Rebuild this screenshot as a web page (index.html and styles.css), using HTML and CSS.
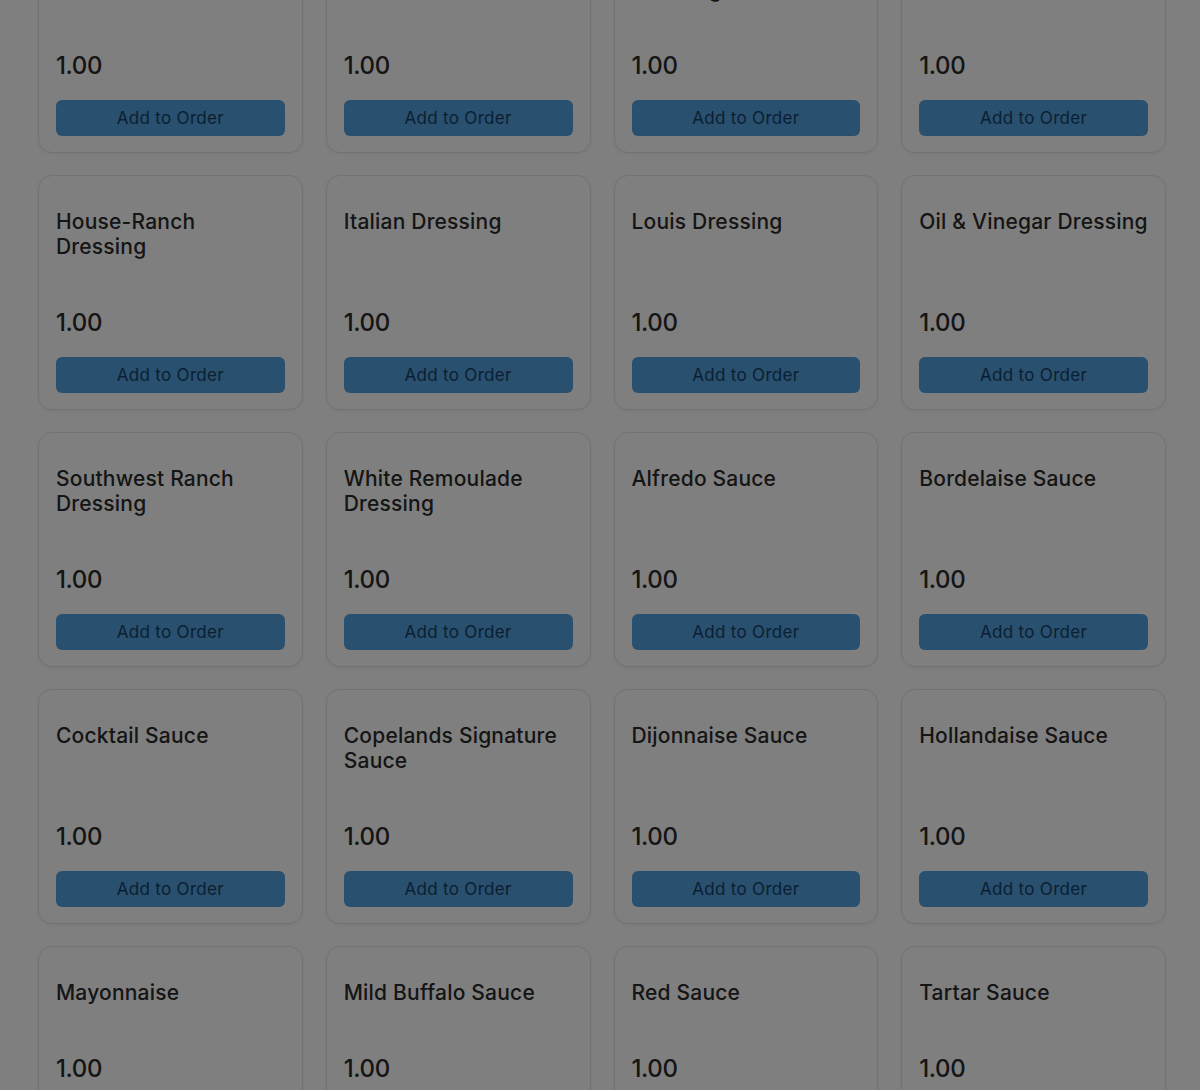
FILE: index.html
```html
<!DOCTYPE html>
<html lang="en">
<head>
<meta charset="utf-8">
<title>Menu</title>
<link rel="stylesheet" href="styles.css">
</head>
<body>
<main class="menu">
  <div class="grid">
    <div class="card"><h3 class="title">Blue Cheese Dressing</h3><div class="price">1.00</div><button class="add">Add to Order</button></div>
    <div class="card"><h3 class="title">Caesar Dressing</h3><div class="price">1.00</div><button class="add">Add to Order</button></div>
    <div class="card"><h3 class="title">Honey Mustard Dressing</h3><div class="price">1.00</div><button class="add">Add to Order</button></div>
    <div class="card"><h3 class="title">Balsamic Vinaigrette</h3><div class="price">1.00</div><button class="add">Add to Order</button></div>

    <div class="card"><h3 class="title">House-Ranch Dressing</h3><div class="price">1.00</div><button class="add">Add to Order</button></div>
    <div class="card"><h3 class="title">Italian Dressing</h3><div class="price">1.00</div><button class="add">Add to Order</button></div>
    <div class="card"><h3 class="title">Louis Dressing</h3><div class="price">1.00</div><button class="add">Add to Order</button></div>
    <div class="card"><h3 class="title">Oil &amp; Vinegar Dressing</h3><div class="price">1.00</div><button class="add">Add to Order</button></div>

    <div class="card"><h3 class="title">Southwest Ranch Dressing</h3><div class="price">1.00</div><button class="add">Add to Order</button></div>
    <div class="card"><h3 class="title">White Remoulade Dressing</h3><div class="price">1.00</div><button class="add">Add to Order</button></div>
    <div class="card"><h3 class="title">Alfredo Sauce</h3><div class="price">1.00</div><button class="add">Add to Order</button></div>
    <div class="card"><h3 class="title">Bordelaise Sauce</h3><div class="price">1.00</div><button class="add">Add to Order</button></div>

    <div class="card"><h3 class="title">Cocktail Sauce</h3><div class="price">1.00</div><button class="add">Add to Order</button></div>
    <div class="card"><h3 class="title">Copelands Signature Sauce</h3><div class="price">1.00</div><button class="add">Add to Order</button></div>
    <div class="card"><h3 class="title">Dijonnaise Sauce</h3><div class="price">1.00</div><button class="add">Add to Order</button></div>
    <div class="card"><h3 class="title">Hollandaise Sauce</h3><div class="price">1.00</div><button class="add">Add to Order</button></div>

    <div class="card"><h3 class="title">Mayonnaise</h3><div class="price">1.00</div><button class="add">Add to Order</button></div>
    <div class="card"><h3 class="title">Mild Buffalo Sauce</h3><div class="price">1.00</div><button class="add">Add to Order</button></div>
    <div class="card"><h3 class="title">Red Sauce</h3><div class="price">1.00</div><button class="add">Add to Order</button></div>
    <div class="card"><h3 class="title">Tartar Sauce</h3><div class="price">1.00</div><button class="add">Add to Order</button></div>
  </div>
</main>
<div class="backdrop"></div>
</body>
</html>
```

FILE: styles.css
```css
html, body {
  margin: 0;
  padding: 0;
  background: #ffffff;
  overflow: hidden;
  height: 1090px;
}

body {
  font-family: Inter, "DejaVu Sans", sans-serif;
  color: #2a2a2a;
}

.menu {
  padding: 0 34px 0 38px;
}

.grid {
  display: grid;
  grid-template-columns: repeat(4, 1fr);
  column-gap: 23px;
  row-gap: 22px;
  margin-top: -82px;
}

.card {
  box-sizing: border-box;
  border: 1px solid #e4e4e4;
  border-radius: 14px;
  box-shadow: 0 1px 4px rgba(0, 0, 0, 0.06);
  background: #ffffff;
  padding: 16px 17px;
  display: flex;
  flex-direction: column;
}

.title {
  margin: 17px 0 50px;
  font-size: 21px;
  line-height: 25px;
  letter-spacing: 0.2px;
  font-weight: 500;
  color: #2a2a2a;
  flex: 1;
}

.price {
  font-size: 24px;
  line-height: 28px;
  font-weight: 500;
  color: #2a2a2a;
  letter-spacing: -0.4px;
}

.add {
  margin-top: 20px;
  height: 36px;
  width: 100%;
  border: 0;
  border-radius: 6px;
  background: #52a0dc;
  color: #163f66;
  font-family: Inter, "DejaVu Sans", sans-serif;
  font-size: 17px;
  letter-spacing: 0.3px;
  font-weight: 400;
  padding: 0;
}

.backdrop {
  position: fixed;
  inset: 0;
  background: rgba(0, 0, 0, 0.5);
}
```
